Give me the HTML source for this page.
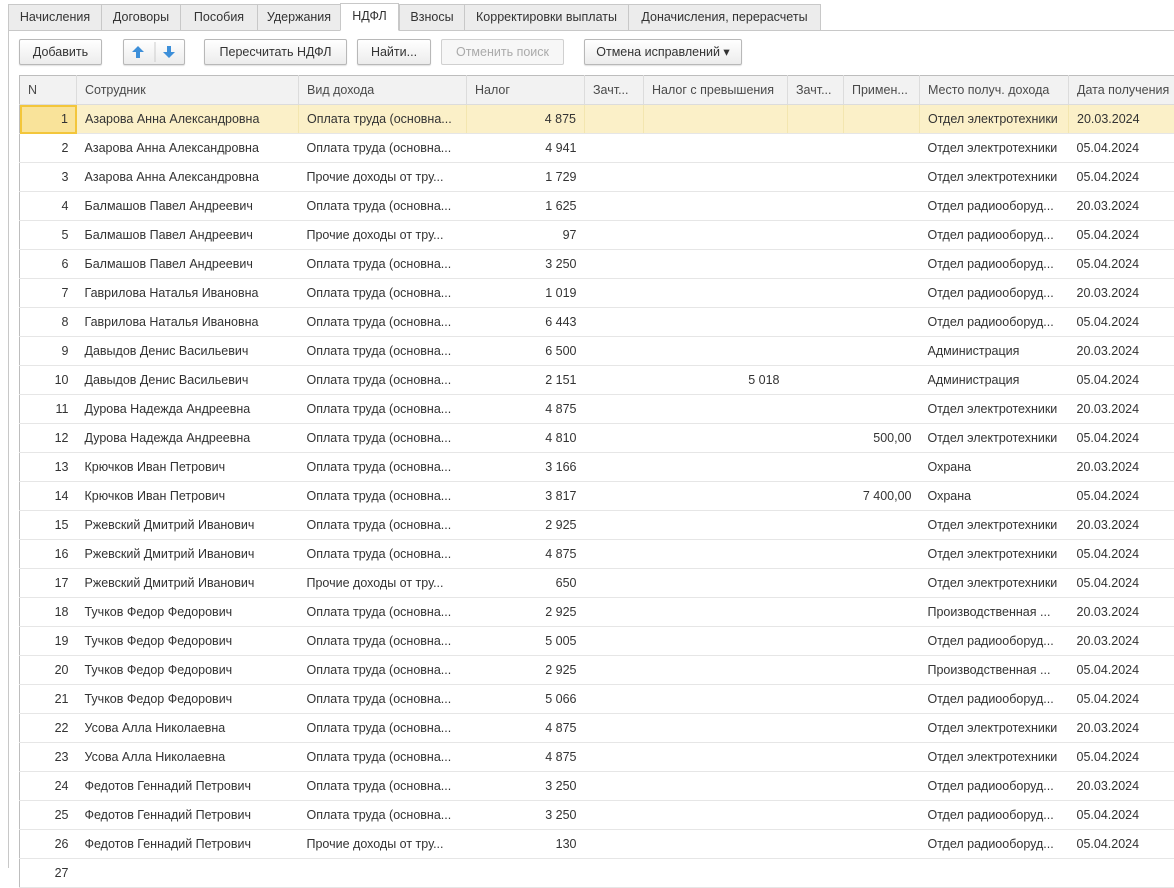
<!DOCTYPE html>
<html><head><meta charset="utf-8"><style>
*{box-sizing:border-box;margin:0;padding:0}
body{width:1174px;height:868px;overflow:hidden;background:#fff;font-family:"Liberation Sans",Arial,sans-serif;font-size:12.5px;color:#333;position:relative}
.vl{position:absolute;left:8px;top:30px;width:1px;height:838px;background:#c8c8c8}
.tabline{position:absolute;left:8px;top:30px;width:1166px;height:1px;background:#c8c8c8}
.tab{position:absolute;top:4px;height:27px;border:1px solid #c8c8c8;border-right:none;background:#ececec;line-height:25px;text-align:center;color:#333}
.tab.act{background:#fff;border-bottom:1px solid #fff;top:3px;height:28px;border-right:1px solid #c8c8c8}
.btn{position:absolute;top:39px;height:26px;border:1px solid #b8b8b8;border-radius:2px;background:linear-gradient(#fff,#ececec);line-height:24px;text-align:center;box-shadow:0 1px 1px rgba(0,0,0,.12)}
.btn.dis{color:#aaa;border-color:#d0d0d0;background:#f7f7f7;box-shadow:none}
table{position:absolute;left:19px;top:75px;border-collapse:collapse;table-layout:fixed;width:1160px;border-top:1px solid #bdbdbd;border-left:1px solid #bdbdbd}
td,th{height:29px;padding:0 8px;white-space:nowrap;overflow:hidden;text-overflow:ellipsis;border-bottom:1px solid #e6e6e6;font-weight:normal;text-align:left}
th{background:#f2f2f2;color:#4a4a4a;border-right:1px solid #dcdcdc;border-bottom:1px solid #dcdcdc}
td.r{text-align:right}
tr.sel td{background:#fbf0c8;border-right:1px solid #f3e6b0}
tr.sel td.n{background:#f9e39a;outline:2px solid #f3c63b;outline-offset:-2px}
</style></head><body>
<div class="vl"></div><div class="tabline"></div>
<div class="tab" style="left:8px;width:93px">Начисления</div>
<div class="tab" style="left:101px;width:79px">Договоры</div>
<div class="tab" style="left:180px;width:77px">Пособия</div>
<div class="tab" style="left:257px;width:83px">Удержания</div>
<div class="tab act" style="left:340px;width:59px">НДФЛ</div>
<div class="tab" style="left:399px;width:65px">Взносы</div>
<div class="tab" style="left:464px;width:164px">Корректировки выплаты</div>
<div class="tab" style="left:628px;width:193px;border-right:1px solid #c8c8c8">Доначисления, перерасчеты</div>
<div class="btn" style="left:19px;width:83px">Добавить</div>
<div class="btn" style="left:123px;width:62px"><svg width="62" height="24" viewBox="0 0 62 24"><path d="M14 6l-6 6h4v6h4v-6h4z" fill="#3d8fd9"/><line x1="31" y1="2" x2="31" y2="22" stroke="#ccc"/><path d="M45 18l-6-6h4V6h4v6h4z" fill="#3d8fd9"/></svg></div>
<div class="btn" style="left:204px;width:143px">Пересчитать НДФЛ</div>
<div class="btn" style="left:357px;width:74px">Найти...</div>
<div class="btn dis" style="left:441px;width:123px">Отменить поиск</div>
<div class="btn" style="left:584px;width:158px">Отмена исправлений ▾</div>
<table>
<colgroup><col style="width:57px"><col style="width:222px"><col style="width:168px"><col style="width:118px"><col style="width:59px"><col style="width:144px"><col style="width:56px"><col style="width:76px"><col style="width:149px"><col style="width:111px"></colgroup>
<tr><th>N</th><th>Сотрудник</th><th>Вид дохода</th><th>Налог</th><th>Зачт...</th><th>Налог с превышения</th><th>Зачт...</th><th>Примен...</th><th>Место получ. дохода</th><th>Дата получения</th></tr>
<tr class="sel"><td class="r n">1</td><td>Азарова Анна Александровна</td><td>Оплата труда (основна...</td><td class="r">4 875</td><td></td><td></td><td></td><td></td><td>Отдел электротехники</td><td>20.03.2024</td></tr>
<tr><td class="r">2</td><td>Азарова Анна Александровна</td><td>Оплата труда (основна...</td><td class="r">4 941</td><td></td><td></td><td></td><td></td><td>Отдел электротехники</td><td>05.04.2024</td></tr>
<tr><td class="r">3</td><td>Азарова Анна Александровна</td><td>Прочие доходы от тру...</td><td class="r">1 729</td><td></td><td></td><td></td><td></td><td>Отдел электротехники</td><td>05.04.2024</td></tr>
<tr><td class="r">4</td><td>Балмашов Павел Андреевич</td><td>Оплата труда (основна...</td><td class="r">1 625</td><td></td><td></td><td></td><td></td><td>Отдел радиооборуд...</td><td>20.03.2024</td></tr>
<tr><td class="r">5</td><td>Балмашов Павел Андреевич</td><td>Прочие доходы от тру...</td><td class="r">97</td><td></td><td></td><td></td><td></td><td>Отдел радиооборуд...</td><td>05.04.2024</td></tr>
<tr><td class="r">6</td><td>Балмашов Павел Андреевич</td><td>Оплата труда (основна...</td><td class="r">3 250</td><td></td><td></td><td></td><td></td><td>Отдел радиооборуд...</td><td>05.04.2024</td></tr>
<tr><td class="r">7</td><td>Гаврилова Наталья Ивановна</td><td>Оплата труда (основна...</td><td class="r">1 019</td><td></td><td></td><td></td><td></td><td>Отдел радиооборуд...</td><td>20.03.2024</td></tr>
<tr><td class="r">8</td><td>Гаврилова Наталья Ивановна</td><td>Оплата труда (основна...</td><td class="r">6 443</td><td></td><td></td><td></td><td></td><td>Отдел радиооборуд...</td><td>05.04.2024</td></tr>
<tr><td class="r">9</td><td>Давыдов Денис Васильевич</td><td>Оплата труда (основна...</td><td class="r">6 500</td><td></td><td></td><td></td><td></td><td>Администрация</td><td>20.03.2024</td></tr>
<tr><td class="r">10</td><td>Давыдов Денис Васильевич</td><td>Оплата труда (основна...</td><td class="r">2 151</td><td></td><td class="r">5 018</td><td></td><td></td><td>Администрация</td><td>05.04.2024</td></tr>
<tr><td class="r">11</td><td>Дурова Надежда Андреевна</td><td>Оплата труда (основна...</td><td class="r">4 875</td><td></td><td></td><td></td><td></td><td>Отдел электротехники</td><td>20.03.2024</td></tr>
<tr><td class="r">12</td><td>Дурова Надежда Андреевна</td><td>Оплата труда (основна...</td><td class="r">4 810</td><td></td><td></td><td></td><td class="r">500,00</td><td>Отдел электротехники</td><td>05.04.2024</td></tr>
<tr><td class="r">13</td><td>Крючков Иван Петрович</td><td>Оплата труда (основна...</td><td class="r">3 166</td><td></td><td></td><td></td><td></td><td>Охрана</td><td>20.03.2024</td></tr>
<tr><td class="r">14</td><td>Крючков Иван Петрович</td><td>Оплата труда (основна...</td><td class="r">3 817</td><td></td><td></td><td></td><td class="r">7 400,00</td><td>Охрана</td><td>05.04.2024</td></tr>
<tr><td class="r">15</td><td>Ржевский Дмитрий Иванович</td><td>Оплата труда (основна...</td><td class="r">2 925</td><td></td><td></td><td></td><td></td><td>Отдел электротехники</td><td>20.03.2024</td></tr>
<tr><td class="r">16</td><td>Ржевский Дмитрий Иванович</td><td>Оплата труда (основна...</td><td class="r">4 875</td><td></td><td></td><td></td><td></td><td>Отдел электротехники</td><td>05.04.2024</td></tr>
<tr><td class="r">17</td><td>Ржевский Дмитрий Иванович</td><td>Прочие доходы от тру...</td><td class="r">650</td><td></td><td></td><td></td><td></td><td>Отдел электротехники</td><td>05.04.2024</td></tr>
<tr><td class="r">18</td><td>Тучков Федор Федорович</td><td>Оплата труда (основна...</td><td class="r">2 925</td><td></td><td></td><td></td><td></td><td>Производственная ...</td><td>20.03.2024</td></tr>
<tr><td class="r">19</td><td>Тучков Федор Федорович</td><td>Оплата труда (основна...</td><td class="r">5 005</td><td></td><td></td><td></td><td></td><td>Отдел радиооборуд...</td><td>20.03.2024</td></tr>
<tr><td class="r">20</td><td>Тучков Федор Федорович</td><td>Оплата труда (основна...</td><td class="r">2 925</td><td></td><td></td><td></td><td></td><td>Производственная ...</td><td>05.04.2024</td></tr>
<tr><td class="r">21</td><td>Тучков Федор Федорович</td><td>Оплата труда (основна...</td><td class="r">5 066</td><td></td><td></td><td></td><td></td><td>Отдел радиооборуд...</td><td>05.04.2024</td></tr>
<tr><td class="r">22</td><td>Усова Алла Николаевна</td><td>Оплата труда (основна...</td><td class="r">4 875</td><td></td><td></td><td></td><td></td><td>Отдел электротехники</td><td>20.03.2024</td></tr>
<tr><td class="r">23</td><td>Усова Алла Николаевна</td><td>Оплата труда (основна...</td><td class="r">4 875</td><td></td><td></td><td></td><td></td><td>Отдел электротехники</td><td>05.04.2024</td></tr>
<tr><td class="r">24</td><td>Федотов Геннадий Петрович</td><td>Оплата труда (основна...</td><td class="r">3 250</td><td></td><td></td><td></td><td></td><td>Отдел радиооборуд...</td><td>20.03.2024</td></tr>
<tr><td class="r">25</td><td>Федотов Геннадий Петрович</td><td>Оплата труда (основна...</td><td class="r">3 250</td><td></td><td></td><td></td><td></td><td>Отдел радиооборуд...</td><td>05.04.2024</td></tr>
<tr><td class="r">26</td><td>Федотов Геннадий Петрович</td><td>Прочие доходы от тру...</td><td class="r">130</td><td></td><td></td><td></td><td></td><td>Отдел радиооборуд...</td><td>05.04.2024</td></tr>
<tr><td class="r">27</td><td></td><td></td><td></td><td></td><td></td><td></td><td></td><td></td><td></td></tr>
</table>
</body></html>
